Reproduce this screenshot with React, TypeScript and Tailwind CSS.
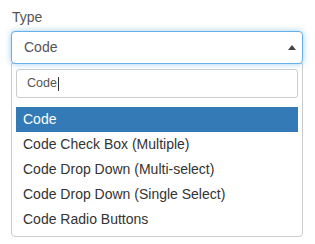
import React from 'react';

const options = [
    'Code',
    'Code Check Box (Multiple)',
    'Code Drop Down (Multi-select)',
    'Code Drop Down (Single Select)',
    'Code Radio Buttons',
];

export default function App() {
    return (
        <div className="w-[315px] h-[244px] bg-white pt-[7px] pl-[11px] font-['Liberation_Sans',Arial,sans-serif]">
            <div className="w-[292px]">
                {/* Label */}
                <div className="h-[20px] mb-[4px] text-[14px] leading-[20px] text-[#555] pl-[1px]">Type</div>

                {/* Select */}
                <div className="relative z-10 h-[33px] flex items-center justify-between px-[12px] border border-[#66afe9] rounded-[4px] bg-white shadow-[0_0_6px_rgba(102,175,233,0.6)]">
                    <span className="text-[14px] text-[#555]">Code</span>
                    <svg width="8" height="5" viewBox="0 0 8 5" className="mr-[-6px]">
                        <path d="M0 5 L4 0 L8 5 Z" fill="#444" />
                    </svg>
                </div>

                {/* Dropdown */}
                <div className="-mt-[1px] border border-[#ccc] rounded-b-[4px] bg-white px-[4px] pt-[5px] pb-[4px]">
                    <div className="h-[29px] flex items-center px-[10px] border border-[#ccc] rounded-[3px] text-[12.5px] text-[#555]">
                        Code<span className="inline-block w-[1px] h-[14px] bg-[#333] ml-[1px]" />
                    </div>
                    <ul className="mt-[9px]">
                        {options.map((opt, i) => (
                            <li
                                key={i}
                                className={`h-[25px] leading-[25px] px-[7px] text-[14px] ${i === 0 ? 'bg-[#337ab7] text-white' : 'text-[#333]'}`}
                            >
                                {opt}
                            </li>
                        ))}
                    </ul>
                </div>
            </div>
        </div>
    );
}
